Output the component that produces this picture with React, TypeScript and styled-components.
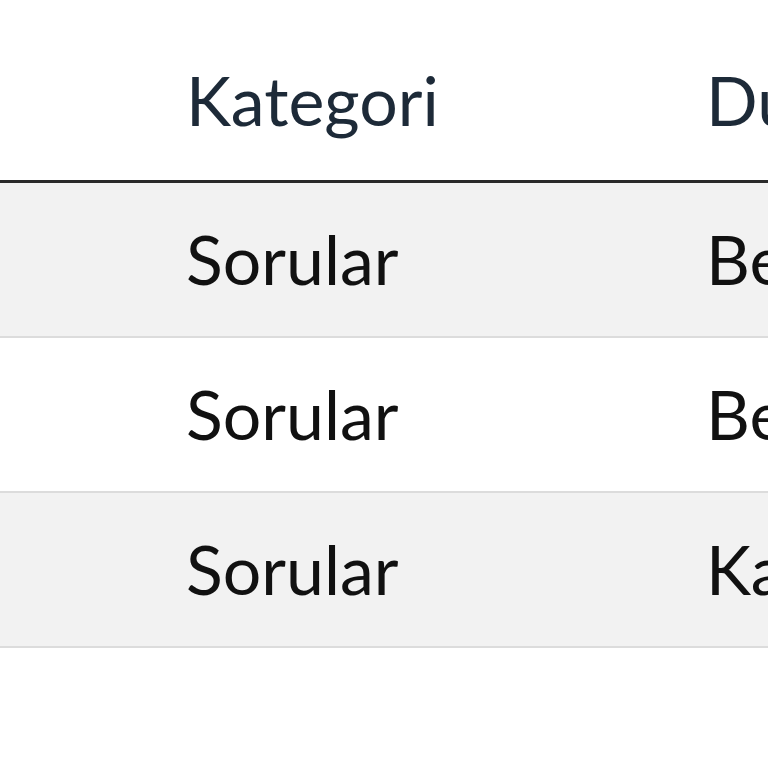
import React from "react";
import styled, { createGlobalStyle } from "styled-components";

const Global = createGlobalStyle`
  html, body { margin: 0; padding: 0; background: #ffffff; overflow: hidden; }
  body { font-family: Lato, "Noto Sans", sans-serif; }
`;

const Table = styled.div`
  width: 1400px;
  display: grid;
  grid-template-columns: 160px 520px 720px;
`;

const HeadCell = styled.div`
  height: 183px;
  border-bottom: 3px solid #2a2a2a;
  box-sizing: border-box;
  display: flex;
  align-items: flex-end;
  padding: 0 0 46px 26px;
  font-size: 68px;
  line-height: 1;
  color: #1d2a38;
`;

const Cell = styled.div<{ $shade: boolean }>`
  height: 155px;
  box-sizing: border-box;
  border-bottom: 2px solid #dcdcdc;
  background: ${(p) => (p.$shade ? "#f2f2f2" : "#ffffff")};
  display: flex;
  align-items: center;
  padding: 0 0 2px 26px;
  font-size: 68px;
  color: #111111;
`;

const rows = [
  ["Sorular", "Belirli"],
  ["Sorular", "Belirsiz"],
  ["Sorular", "Kapalı"],
];

export default function App() {
  return (
    <>
      <Global />
      <Table>
        <HeadCell />
        <HeadCell>Kategori</HeadCell>
        <HeadCell>Durum</HeadCell>
        {rows.map((r, i) => (
          <React.Fragment key={i}>
            <Cell $shade={i % 2 === 0} />
            <Cell $shade={i % 2 === 0}>{r[0]}</Cell>
            <Cell $shade={i % 2 === 0}>{r[1]}</Cell>
          </React.Fragment>
        ))}
      </Table>
    </>
  );
}
